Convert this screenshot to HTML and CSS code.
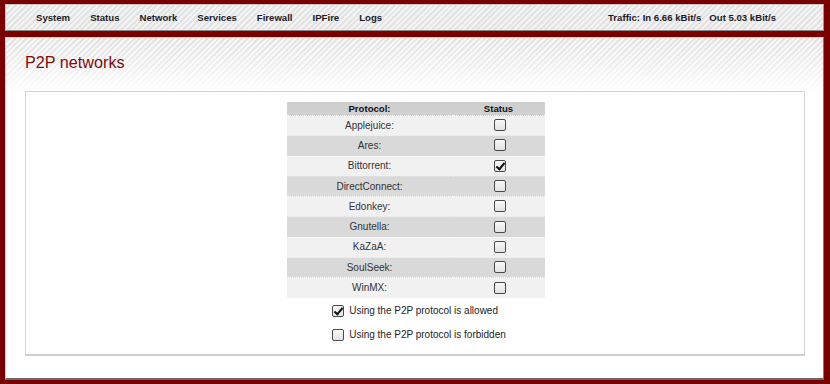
FILE: index.html
```html
<!DOCTYPE html>
<html>
<head>
<meta charset="utf-8">
<link rel="stylesheet" href="styles.css">
</head>
<body>
<div class="navbar">
  <ul class="menu">
    <li>System</li>
    <li>Status</li>
    <li>Network</li>
    <li>Services</li>
    <li>Firewall</li>
    <li>IPFire</li>
    <li>Logs</li>
  </ul>
  <div class="traffic"><span>Traffic: In 6.66 kBit/s</span><span class="out">Out 5.03 kBit/s</span></div>
</div>
<div class="panel">
  <h1 class="title">P2P networks</h1>
  <div class="box">
    <table class="proto">
      <thead>
        <tr><th class="c-proto">Protocol:</th><th class="c-status">Status</th></tr>
      </thead>
      <tbody>
        <tr class="light"><td>Applejuice:</td><td><input type="checkbox" class="cb"></td></tr>
        <tr class="dark"><td>Ares:</td><td><input type="checkbox" class="cb"></td></tr>
        <tr class="light"><td>Bittorrent:</td><td><input type="checkbox" class="cb" checked></td></tr>
        <tr class="dark"><td>DirectConnect:</td><td><input type="checkbox" class="cb"></td></tr>
        <tr class="light"><td>Edonkey:</td><td><input type="checkbox" class="cb"></td></tr>
        <tr class="dark"><td>Gnutella:</td><td><input type="checkbox" class="cb"></td></tr>
        <tr class="light"><td>KaZaA:</td><td><input type="checkbox" class="cb"></td></tr>
        <tr class="dark"><td>SoulSeek:</td><td><input type="checkbox" class="cb"></td></tr>
        <tr class="light"><td>WinMX:</td><td><input type="checkbox" class="cb"></td></tr>
      </tbody>
    </table>
    <div class="options">
      <label class="opt"><input type="checkbox" class="cb" checked><span>Using the P2P protocol is allowed</span></label>
      <label class="opt"><input type="checkbox" class="cb"><span>Using the P2P protocol is forbidden</span></label>
    </div>
  </div>
</div>
</body>
</html>
```

FILE: styles.css
```css
html, body {
  margin: 0;
  padding: 0;
}
body {
  background-color: #930000;
  background-image: radial-gradient(rgba(40,0,0,0.35) 0.6px, transparent 0.9px);
  background-size: 2px 2px;
  padding: 4px 6px 4px 5px;
  font-family: "Liberation Sans", Arial, sans-serif;
  font-size: 10px;
  color: #222;
  height: 384px;
  box-sizing: border-box;
}
.navbar {
  height: 27px;
  box-sizing: border-box;
  border: 1px solid #c8c8c8;
  border-bottom-color: #8a8a8a;
  border-right-color: #9a9a9a;
  background-color: #ececec;
  background-image: repeating-linear-gradient(135deg, #f3f3f3 0, #f3f3f3 2px, #e3e3e3 2px, #e3e3e3 4px);
  display: flex;
  align-items: center;
  justify-content: space-between;
  padding: 0 47px 1px 30px;
}
.menu {
  list-style: none;
  margin: 0;
  padding: 0;
  display: flex;
  gap: 20px;
}
.menu li, .traffic {
  font-weight: bold;
  font-size: 9.6px;
  color: #1c1c28;
}
.traffic .out {
  margin-left: 8px;
}
.panel {
  margin-top: 6px;
  height: 343px;
  box-sizing: border-box;
  border: 1px solid #d0d0d0;
  border-right-color: #7d7d7d;
  border-bottom: 2px solid #6a6a6a;
  background-color: #fff;
  background-image:
    linear-gradient(rgba(255,255,255,0) 0, rgba(255,255,255,0.4) 25px, #fff 55px),
    repeating-linear-gradient(135deg, #f6f6f6 0, #f6f6f6 2px, #e2e2e2 2px, #e2e2e2 4px);
  background-size: 100% 60px, 100% 60px;
  background-repeat: no-repeat;
  padding: 14px 18px 0 19px;
}
.title {
  margin: 0;
  font-weight: normal;
  font-size: 16.2px;
  line-height: 20px;
  color: #7a0c0c;
}
.box {
  margin-top: 19px;
  height: 265px;
  box-sizing: border-box;
  border: 1px solid #d4d4d4;
  border-bottom: 2px solid #cfcfcf;
  background: #fff;
  padding-top: 10px;
  display: flex;
  flex-direction: column;
  align-items: center;
}
.proto {
  width: 258px;
  border-collapse: collapse;
  margin-left: 1px;
}
.proto th {
  background: #cfcfcf;
  height: 13px;
  padding: 0;
  font-size: 9.6px;
  font-weight: bold;
  color: #111;
  line-height: 13px;
}
.c-proto { width: 166px; }
.proto td {
  height: 19.3px;
  padding: 0;
  text-align: center;
  color: #333;
  line-height: 12px;
}
.proto tr.light td {
  background: #f1f1f1;
  border-top: 1px dotted #fdfdfd;
}
.proto tr.dark td {
  background: #d9d9d9;
  border-top: 1px dotted #e6e6e6;
}
.proto td .cb {
  vertical-align: middle;
  margin: 0 0 1px 2px;
}
.cb {
  appearance: none;
  -webkit-appearance: none;
  width: 12px;
  height: 12px;
  box-sizing: border-box;
  border: 1px solid #4a4a4a;
  border-radius: 2px;
  background: linear-gradient(#f8f8f8, #e2e2e2);
  margin: 0;
  position: relative;
  display: inline-block;
}
.cb:checked::after {
  content: "";
  position: absolute;
  left: 3px;
  top: 0px;
  width: 3px;
  height: 7px;
  border: solid #111;
  border-width: 0 2px 2px 0;
  transform: rotate(40deg);
}
.options {
  margin-top: 7px;
  display: flex;
  flex-direction: column;
  align-items: flex-start;
  gap: 12px;
  margin-left: 8px;
}
.opt {
  display: flex;
  align-items: center;
  gap: 5px;
  color: #222;
  font-size: 10px;
  height: 12px;
}
```
